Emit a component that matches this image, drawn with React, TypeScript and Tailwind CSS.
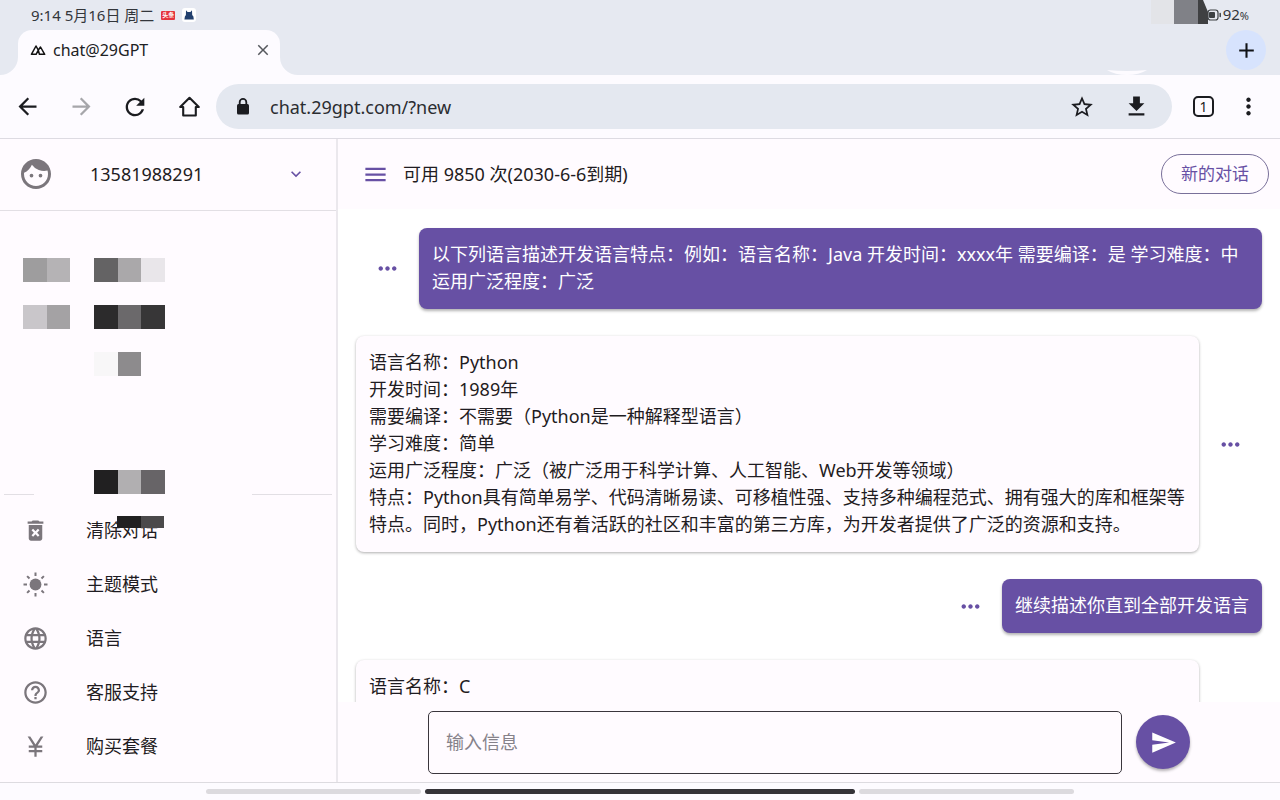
import React from "react";
import {
  MdAdd,
  MdArrowBack,
  MdArrowForward,
  MdClose,
  MdCurrencyYen,
  MdDeleteForever,
  MdDownload,
  MdExpandMore,
  MdFace,
  MdHelpOutline,
  MdLanguage,
  MdMenu,
  MdMoreHoriz,
  MdMoreVert,
  MdRefresh,
  MdSend,
  MdStarBorder,
} from "react-icons/md";

const HomeIcon = () => (
  <svg viewBox="0 0 27 27" className="size-[27px]" fill="none" stroke="currentColor" strokeWidth="2.1" strokeLinejoin="round">
    <path d="M4.200 14 13.500 4.800l9.300 9.200H19.800v8.500H7.200V14z" />
  </svg>
);

const LockIcon = () => (
  <svg viewBox="0 0 16 20" className="h-5 w-4" fill="none">
    <rect x="2" y="7" width="12" height="10.500" rx="1.500" fill="currentColor" />
    <path d="M4.700 7.500V5.100a3.300 3.300 0 0 1 6.600 0v2.400" stroke="currentColor" strokeWidth="1.800" />
  </svg>
);

const SunIcon = () => (
  <svg viewBox="0 0 27 27" className="size-[27px]" fill="none" stroke="currentColor" strokeWidth="2" strokeLinecap="butt">
    <circle cx="13.500" cy="13.500" r="5.900" fill="currentColor" stroke="none" />
    <path d="M13.500 1.500v3.500M13.500 22v3.500M1.500 13.500H5M22 13.500h3.500M5.100 5.100l2.400 2.400M19.500 19.500l2.400 2.400M5.100 21.900l2.400-2.400M19.500 7.500l2.400-2.400" />
  </svg>
);

const PeaksLogo = () => (
  <svg viewBox="0 0 16 12" className="h-3 w-4" fill="none" stroke="#111" strokeWidth="1.500" strokeLinejoin="round" strokeLinecap="round">
    <path d="M3.900 10.300H1.400L6 2l2.300 4.200-2.200 4.100H3.900M8.300 6.200 10.500 3l4.200 7.300H9.400L8.300 6.200" />
  </svg>
);

const CatAppIcon = () => (
  <svg viewBox="0 0 14 14" className="size-3.5">
    <rect width="14" height="14" rx="3" fill="#fff" />
    <path d="M4 2.300 5.600 4h2.800L10 2.300l.2 4.700 1.200 1.500.4 3H2.400l.5-3L3.900 7z" fill="#22406e" />
  </svg>
);

const BatteryIcon = () => (
  <svg viewBox="0 0 16 12" className="h-3 w-4" fill="none">
    <rect x="1" y="1" width="10" height="10" rx="2.500" stroke="#3c4043" strokeWidth="1.200" />
    <rect x="2" y="3" width="6" height="6" rx="1" fill="#3c4043" />
    <path d="M13.200 4.500v3" stroke="#3c4043" strokeWidth="1.500" strokeLinecap="round" />
  </svg>
);

const TabFlare = ({ className }: { className: string }) => (
  <svg viewBox="0 0 18 18" className={className} aria-hidden="true">
    <path d="M18 0v18H0A18 18 0 0 0 18 0z" fill="#fdfbff" />
  </svg>
);

function StatusBar() {
  return (
    <div className="relative flex h-[30px] items-center justify-between pr-[31px] pl-[31px] text-[#33363b]">
      <div className="flex items-center gap-[7px]">
        <span className="text-[15px] leading-5">9:14 5月16日 周二</span>
        <span className="flex h-[9px] w-3.5 items-center justify-center overflow-hidden rounded-[1px] bg-[#e5343e] text-[6px] font-bold whitespace-nowrap text-white">
          头条
        </span>
        <CatAppIcon />
      </div>
      <div className="flex items-center">
        <BatteryIcon />
        <span className="text-[15px] leading-5">
          92<span className="text-[11px]">%</span>
        </span>
      </div>
      <svg viewBox="0 0 58 24" className="absolute top-0 right-[71px] h-6 w-[58px]" aria-hidden="true">
        <rect width="23" height="24" fill="#e3e4e8" />
        <rect x="23" width="24" height="24" fill="#808187" />
        <path d="M47 0h5l5 12v12H47z" fill="#3f4042" />
      </svg>
    </div>
  );
}

function TabStrip() {
  return (
    <div className="relative flex h-[45px] justify-between pr-3.5 pl-[18px]">
      <div className="relative flex w-[262px] items-center rounded-t-[14px] bg-[#fdfbff] pr-1.5 pb-1.5 pl-3">
        <TabFlare className="absolute bottom-0 -left-[18px] size-[18px]" />
        <TabFlare className="absolute -right-[18px] bottom-0 size-[18px] -scale-x-100" />
        <PeaksLogo />
        <span className="ml-[7px] flex-1 text-base text-[#202124]">chat@29GPT</span>
        <button aria-label="关闭标签页" className="flex size-[22px] items-center justify-center text-[#55585d]">
          <MdClose size={18} />
        </button>
      </div>
      <button aria-label="新标签页" className="flex size-10 items-center justify-center rounded-full bg-[#d7e3fd] text-[#111316]">
        <MdAdd size={25} />
      </button>
      <svg viewBox="0 0 40 5" className="absolute right-[133px] bottom-0 h-[5px] w-10" aria-hidden="true">
        <path d="M0 0q20 2 40 0-8 5-20 5T0 0z" fill="#fdfbff" />
      </svg>
    </div>
  );
}

function Toolbar() {
  const nav = "flex h-[54px] w-[54px] items-center justify-center";
  return (
    <div className="flex h-16 shrink-0 items-center border-b border-[#dddbe2] bg-[#fdfbff] text-[#1b1c20]">
      <button aria-label="后退" className={nav}><MdArrowBack size={27} /></button>
      <button aria-label="前进" className="flex h-[54px] w-[54px] items-center justify-center text-[#a6a6aa]"><MdArrowForward size={27} /></button>
      <button aria-label="刷新" className={nav}><MdRefresh size={28} /></button>
      <button aria-label="主页" className={nav}><HomeIcon /></button>
      <div className="flex h-[45px] min-w-0 flex-1 items-center rounded-full bg-[#e4e8f0] pr-[9px] pl-[19px]">
        <LockIcon />
        <input
          aria-label="网址"
          defaultValue="chat.29gpt.com/?new"
          className="ml-[19px] h-full min-w-0 flex-1 bg-transparent text-lg text-[#2b2d31] outline-none"
        />
        <button aria-label="收藏" className={nav}><MdStarBorder size={26} /></button>
        <button aria-label="下载" className={nav}><MdDownload size={27} /></button>
      </div>
      <button aria-label="标签页" className="ml-[21px] flex size-[21px] items-center justify-center rounded-[5px] border-2 border-current text-sm leading-none">
        1
      </button>
      <button aria-label="更多" className="mr-[9px] ml-3 flex h-[54px] w-[45px] items-center justify-center"><MdMoreVert size={27} /></button>
    </div>
  );
}

const conversations = [
  {
    icon: ["bg-[#9e9d9e]", "bg-[#b5b3b5]"],
    title: ["bg-[#646364]", "bg-[#aaa8aa]", "bg-[#e9e6ea]"],
  },
  {
    icon: ["bg-[#c9c6ca]", "bg-[#a4a2a4]"],
    title: ["bg-[#2c2b2c]", "bg-[#6b696b]", "bg-[#373637]"],
  },
  { icon: [], title: ["bg-[#f8f7f8]", "bg-[#8d8b8d]", "bg-transparent"] },
];

const Blocks = ({ colors, className }: { colors: string[]; className: string }) => (
  <div className={className}>
    {colors.map((c, i) => (
      <span key={i} className={"flex-1 " + c} />
    ))}
  </div>
);

const menu = [
  { label: "清除对话", icon: <MdDeleteForever size={27} />, masked: true },
  { label: "主题模式", icon: <SunIcon /> },
  { label: "语言", icon: <MdLanguage size={27} /> },
  { label: "客服支持", icon: <MdHelpOutline size={27} /> },
  { label: "购买套餐", icon: <MdCurrencyYen size={27} /> },
];

function Sidebar() {
  return (
    <aside className="flex w-[338px] shrink-0 flex-col border-r-2 border-[#ebe8ed] bg-[#fffbff]">
      <button className="flex h-[72px] shrink-0 items-center border-b border-[#e2dfe4] pr-[30px] pb-0.5 pl-[18px] text-left">
        <MdFace size={36} className="text-[#7b767c]" />
        <span className="ml-9 flex-1 text-lg">13581988291</span>
        <MdExpandMore size={20} className="text-[#6750a4]" />
      </button>
      <div className="flex min-h-0 flex-1 flex-col justify-between">
        <div className="flex flex-col gap-[23px] pt-[47px] pl-[23px]">
          {conversations.map((c, i) => (
            <div key={i} className="flex h-6 gap-6">
              <Blocks colors={c.icon} className="flex w-[47px]" />
              <Blocks colors={c.title} className="flex w-[71px]" />
            </div>
          ))}
        </div>
        <div className="pl-[94px]">
          <Blocks colors={["bg-[#212021]", "bg-[#b1afb1]", "bg-[#676467]"]} className="flex h-6 w-[71px]" />
        </div>
      </div>
      <div className="flex shrink-0 justify-between px-1">
        <span className="h-px w-[30px] bg-[#e2dfe4]" />
        <span className="h-px w-20 bg-[#e2dfe4]" />
      </div>
      <nav className="shrink-0 pt-2 pb-[9px]">
        {menu.map((m) => (
          <button key={m.label} className="relative flex h-[54px] w-full items-center pl-[22px] text-left">
            <span className="text-[#7b767c]">{m.icon}</span>
            <span className="ml-[37px] text-lg">{m.label}</span>
            {m.masked && (
              <Blocks colors={["bg-[#212021]", "bg-[#4b494b]"]} className="absolute top-[13px] left-[117px] flex h-3 w-[47px]" />
            )}
          </button>
        ))}
      </nav>
    </aside>
  );
}

const MessageMenu = () => (
  <button aria-label="消息选项" className="flex w-[63px] shrink-0 items-center justify-center text-[#6750a4]">
    <MdMoreHoriz size={27} />
  </button>
);

function Message({ own, lines }: { own?: boolean; lines: string[] }) {
  return own ? (
    <div className="flex shrink-0 items-center justify-end">
      <MessageMenu />
      <div className="rounded-lg bg-[#6750a4] px-[13px] pt-[13px] pb-3.5 text-white shadow-[0_2px_3px_rgba(0,0,0,0.3)]">
        {lines.map((l) => <p key={l}>{l}</p>)}
      </div>
    </div>
  ) : (
    <div className="flex shrink-0 items-center">
      <div className="min-h-[216px] flex-1 rounded-lg bg-[#fffbff] px-[13px] pt-[13px] pb-3.5 shadow-[0_1px_3px_rgba(0,0,0,0.32)]">
        {lines.map((l) => <p key={l}>{l}</p>)}
      </div>
      <MessageMenu />
    </div>
  );
}

const messages = [
  {
    own: true,
    lines: ["以下列语言描述开发语言特点：例如：语言名称：Java 开发时间：xxxx年 需要编译：是 学习难度：中 运用广泛程度：广泛"],
  },
  {
    lines: [
      "语言名称：Python",
      "开发时间：1989年",
      "需要编译：不需要（Python是一种解释型语言）",
      "学习难度：简单",
      "运用广泛程度：广泛（被广泛用于科学计算、人工智能、Web开发等领域）",
      "特点：Python具有简单易学、代码清晰易读、可移植性强、支持多种编程范式、拥有强大的库和框架等特点。同时，Python还有着活跃的社区和丰富的第三方库，为开发者提供了广泛的资源和支持。",
    ],
  },
  { own: true, lines: ["继续描述你直到全部开发语言"] },
  { lines: ["语言名称：C"] },
];

function Chat() {
  return (
    <main className="flex min-w-0 flex-1 flex-col">
      <header className="flex h-[70px] shrink-0 items-center bg-[#fffbff] pr-[11px] pl-6">
        <button aria-label="菜单" className="text-[#6750a4]"><MdMenu size={27} /></button>
        <h1 className="ml-3.5 flex-1 text-lg">可用 9850 次(2030-6-6到期)</h1>
        <button className="h-10 rounded-full border border-[#79709a] px-[19px] text-[17px] text-[#6750a4]">新的对话</button>
      </header>
      <section className="flex min-h-0 flex-1 flex-col gap-[27px] overflow-hidden bg-white px-[18px] pt-[19px] text-lg leading-[27px]">
        {messages.map((m, i) => <Message key={i} own={m.own} lines={m.lines} />)}
      </section>
      <form className="flex h-20 shrink-0 items-center gap-3.5 bg-[#fffbff] px-[90px]" onSubmit={(e) => e.preventDefault()}>
        <input
          aria-label="输入信息"
          placeholder="输入信息"
          className="h-[63px] min-w-0 flex-1 rounded-[5px] border border-[#3a363d] bg-transparent px-[17px] text-lg outline-none placeholder:text-[#86828a]"
        />
        <button aria-label="发送" className="flex size-[54px] items-center justify-center rounded-full bg-[#6750a4] text-white shadow-[0_2px_3px_rgba(0,0,0,0.3)]">
          <MdSend size={27} />
        </button>
      </form>
    </main>
  );
}

export default function App() {
  return (
    <div className="flex h-screen flex-col overflow-hidden bg-[#fdfbff] font-['Noto_Sans','Noto_Sans_CJK_SC',sans-serif] text-[#1f1c22]">
      <div className="shrink-0 bg-[#e6e9f1]">
        <StatusBar />
        <TabStrip />
      </div>
      <Toolbar />
      <div className="flex min-h-0 flex-1">
        <Sidebar />
        <Chat />
      </div>
      <footer className="flex h-[18px] shrink-0 items-center justify-center gap-1 border-t border-[#dddbe0]">
        <span className="h-[5px] w-[215px] rounded-full bg-[#dcdade]" />
        <span className="h-[5px] w-[430px] rounded-full bg-[#353338]" />
        <span className="h-[5px] w-[215px] rounded-full bg-[#dcdade]" />
      </footer>
    </div>
  );
}
